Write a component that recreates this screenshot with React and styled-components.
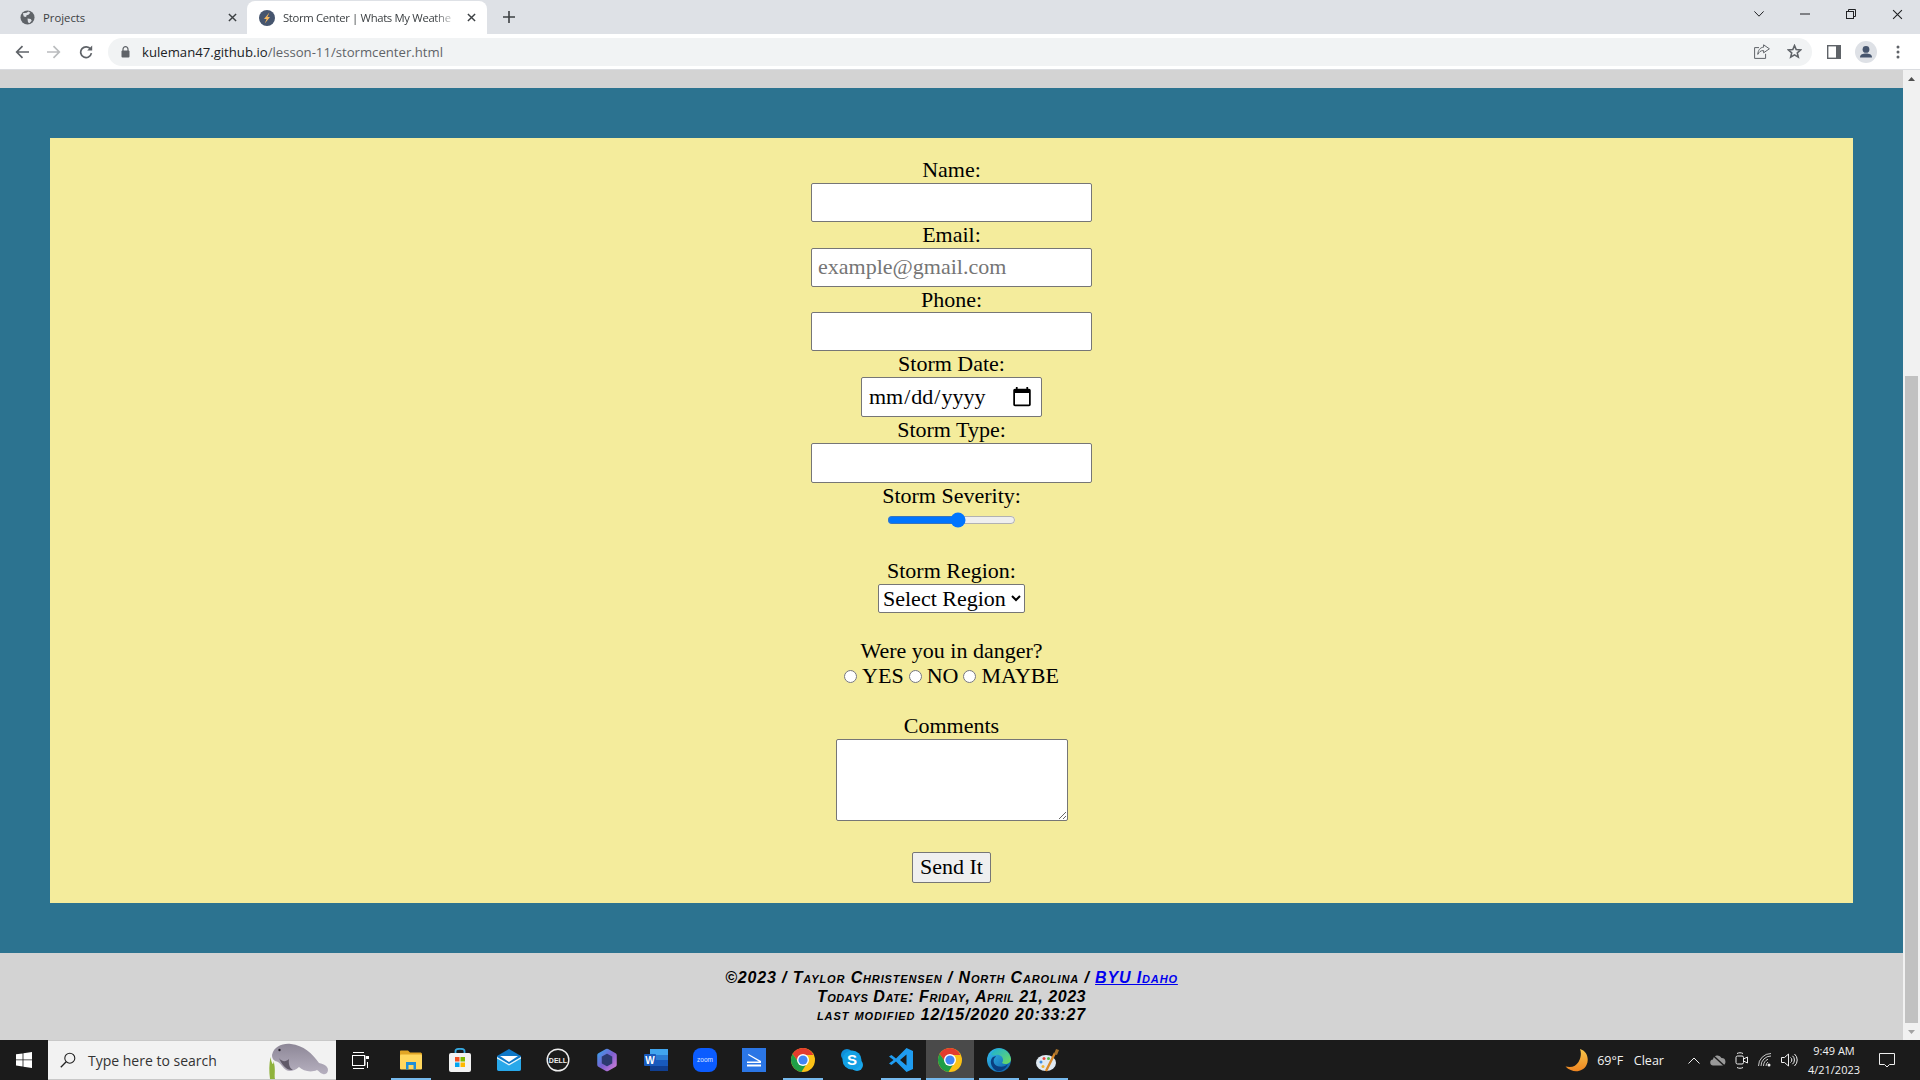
import React from "react";
import styled, { createGlobalStyle } from "styled-components";

const Global = createGlobalStyle`
  html, body { margin: 0; padding: 0; height: 100%; overflow: hidden; }
  #root { height: 100%; }
  * { box-sizing: border-box; }
`;

const Shell = styled.div`
  width: 1920px; height: 1080px; display: flex; flex-direction: column;
  font-family: "Open Sans", "Noto Sans", sans-serif; background: #d3d3d3;
`;

/* ---------- browser chrome ---------- */
const TabStrip = styled.div`
  height: 34px; background: #dee1e6; display: flex; align-items: stretch; flex: none;
`;
const Tab = styled.div`
  width: ${p => p.$w}px; padding-left: ${p => p.$pl}px; padding-right: ${p => p.$pr}px;
  display: flex; align-items: center; gap: 8px; font-size: 11.3px; color: #3c4043;
  margin-top: 1px;
  background: ${p => (p.$active ? "#fff" : "transparent")};
  border-radius: ${p => (p.$active ? "8px 8px 0 0" : "0")};
`;
const TabTitle = styled.span`
  flex: 1; white-space: nowrap; min-width: 0;
  ${p => p.$fade && "letter-spacing: -.33px; -webkit-mask-image: linear-gradient(90deg, #000 86%, transparent 99%);"}
`;
const NewTab = styled.div`
  width: 44px; display: flex; align-items: center; justify-content: center;
`;
const WindowControls = styled.div`
  margin-left: auto; display: flex; align-items: center; height: 28px;
`;
const WinBtn = styled.div`
  width: 46px; height: 28px; display: flex; align-items: center; justify-content: center;
`;

const Toolbar = styled.div`
  height: 36px; background: #fff; display: flex; align-items: center; flex: none;
  border-bottom: 1px solid #dadce0; padding-left: 6px;
`;
const NavBtn = styled.div`
  width: 32px; height: 28px; display: flex; align-items: center; justify-content: center;
`;
const Omnibox = styled.div`
  width: 1704px; height: 28px; margin-left: 6px; border-radius: 14px; background: #f1f3f4;
  display: flex; align-items: center; padding-left: 13px; gap: 12px; font-size: 13.15px;
`;
const UrlHost = styled.span`color: #202124;`;
const UrlPath = styled.span`color: #5f6368;`;
const OmniEnd = styled.div`
  margin-left: auto; display: flex; align-items: center; gap: 16.5px; padding-right: 10.5px;
`;
const ToolEnd = styled.div`
  display: flex; align-items: center; margin-left: 15px; gap: 14px;
`;
const DotsSlot = styled.div`display: flex; margin-left: 5px;`;

/* ---------- page ---------- */
const Middle = styled.div`flex: 1; display: flex; min-height: 0;`;
const Viewport = styled.div`flex: 1; display: flex; flex-direction: column; min-width: 0;`;
const HeaderSliver = styled.div`height: 18px; background: #d3d3d3; flex: none;`;
const Main = styled.main`flex: 1; background: #2c7390; padding: 50px; display: flex;`;
const Panel = styled.div`
  flex: 1; background: #f4ec9c; padding-top: 19.4px; display: flex; flex-direction: column; align-items: center;
  font-family: "Liberation Serif", "Times New Roman", serif; font-size: 22px; color: #000;
`;
const Label = styled.label`
  display: block; line-height: 25.6px; height: 25.6px; text-align: center; margin-top: ${p => p.$mt || 0}px;
`;
const TextInput = styled.input`
  width: 281px; height: ${p => p.$h || 39}px; font: inherit; padding: 1px 6px; border: 1px solid #767676; border-radius: 2px;
  background: #fff; display: block;
  &::placeholder { color: #757575; }
`;
const DateInput = styled.input`
  width: 181px; height: 40.4px; font: inherit; padding: 1px 6px; border: 1px solid #767676; border-radius: 2px;
  background: #fff; display: block;
`;
const Range = styled.input`
  width: 129px; height: 16px; margin: 3.6px 0 0; display: block; accent-color: #0075ff;
`;
const Select = styled.select`
  width: 147px; height: 29px; font: inherit; border: 1px solid #767676; border-radius: 2px; background: #fff;
  display: block; padding: 0;
`;
const RadioRow = styled.div`
  display: flex; align-items: center; height: 25.6px; justify-content: center;
`;
const Radio = styled.input`
  width: 13px; height: 13px; margin: 2px 5px 0 ${p => p.$ml}px; flex: none;
`;
const Comments = styled.textarea`
  width: 232px; height: 82px; font: inherit; border: 1px solid #767676; border-radius: 2px; background: #fff;
  display: block; padding: 2px;
`;
const Send = styled.button`
  width: 79px; height: 31px; margin-top: 31px; font: inherit; padding: 0; border: 1px solid #767676;
  border-radius: 2px; background: #efefef; color: #000;
`;
const Footer = styled.footer`
  height: 87px; background: #d3d3d3; flex: none; padding-top: 16px; text-align: center; color: #000;
  font-family: "Liberation Sans", Arial, sans-serif; font-style: italic; font-weight: 700; font-variant: small-caps;
  font-size: 16px; line-height: 18.7px;
`;
const FooterLine = styled.div`letter-spacing: ${p => p.$ls}px;`;
const FooterLink = styled.a`color: #0000ee; text-decoration: underline;`;

const Scrollbar = styled.div`
  width: 17px; flex: none; background: #f1f1f1; display: flex; flex-direction: column; align-items: center;
`;
const ScrollArrow = styled.div`
  height: 17px; flex: none; display: flex; align-items: center; justify-content: center; width: 100%;
`;
const ScrollTrack = styled.div`
  flex: 1; width: 100%; display: flex; flex-direction: column; justify-content: flex-end; align-items: center;
`;
const ScrollThumb = styled.div`width: 13px; height: 647px; background: #c1c1c1;`;

/* ---------- taskbar ---------- */
const Taskbar = styled.div`
  height: 40px; flex: none; background: #1b1b1b; display: flex; align-items: stretch; color: #fff;
`;
const Start = styled.div`width: 48px; display: flex; align-items: center; justify-content: center;`;
const Search = styled.div`
  width: 288px; background: #f2f2f2; border-top: 1px solid #c8c8c8; border-bottom: 1px solid #c8c8c8;
  display: flex; align-items: center; color: #333; font-size: 14px; padding-left: 12px; gap: 12px;
`;
const SearchArt = styled.div`margin-left: auto; height: 38px; display: flex; align-items: flex-end; margin-right: 5px;`;
const TaskList = styled.div`display: flex; gap: 1px; margin-left: 2px;`;
const TaskBtn = styled.div`
  width: 48px; display: flex; align-items: center; justify-content: center; position: relative;
  padding-right: ${p => p.$pr || 0}px;
  background: ${p => (p.$active ? "#4a4a4a" : "transparent")};
  &::after {
    content: ""; display: ${p => (p.$open ? "block" : "none")}; position: absolute; bottom: 0; height: 2px;
    left: ${p => (p.$active ? 0 : 4)}px; right: ${p => (p.$active ? 0 : 4)}px; background: #76b9ed;
  }
`;
const Tray = styled.div`
  margin-left: auto; display: flex; align-items: center; font-size: 12.5px; color: #f2f2f2; padding-right: 15px;
`;
const Weather = styled.div`display: flex; align-items: center; gap: 9px; margin-right: 24.5px;`;
const Temp = styled.span`margin-right: 1.5px;`;
const TrayIcons = styled.div`display: flex; align-items: center; gap: 9.4px;`;
const Clock = styled.div`
  width: 70px; margin-left: 1px; text-align: center; font-size: 11px; line-height: 19px;
`;
const Notify = styled.div`width: 36px; display: flex; justify-content: center;`;
const LogoText = styled.text`
  font-family: "Liberation Sans", Arial, sans-serif; font-weight: ${p => p.$w || 400};
`;

/* ---------- icons ---------- */
const Globe = () => (
  <svg width="15" height="15" viewBox="0 0 16 16">
    <circle cx="8" cy="8" r="7.5" fill="#5f6368" />
    <path d="M3 3.5 L7 3 L9 1.5 L11 3 L9 5 L7 5.5 L6.5 7.5 L4 7 Z M8 9 L11.5 9.5 L12.5 11.5 L10 14 L8.5 13 Z" fill="#dee1e6" />
  </svg>
);
const Bolt = () => (
  <svg width="16" height="16" viewBox="0 0 16 16">
    <circle cx="8" cy="8" r="8" fill="#46556e" />
    <path d="M10.4 2.6 L5 9 L7.6 9 L5.8 13.4 L11 7 L8.4 7 Z" fill="#f6b75c" />
  </svg>
);
const X = ({ c = "#3c4043", s = 9, w = 1.6 }) => (
  <svg width={s} height={s} viewBox="0 0 10 10"><path d="M1 1 L9 9 M9 1 L1 9" stroke={c} strokeWidth={w} fill="none" /></svg>
);
const Plus = () => (
  <svg width="12" height="12" viewBox="0 0 12 12"><path d="M6 0 V12 M0 6 H12" stroke="#3c4043" strokeWidth="1.6" /></svg>
);
const Arrow = ({ c, flip }) => (
  <svg width="14" height="14" viewBox="0 0 14 14" style={flip ? { transform: "scaleX(-1)" } : undefined}>
    <path d="M14 7 H2 M7.5 1.2 L1.7 7 L7.5 12.8" stroke={c} strokeWidth="1.7" fill="none" />
  </svg>
);
const Reload = () => (
  <svg width="14" height="14" viewBox="0 0 14 14">
    <path d="M11.6 4.2 A5.4 5.4 0 1 0 12.4 8.2" stroke="#5f6368" strokeWidth="1.7" fill="none" />
    <path d="M13.2 0.6 V5.6 H8.2 Z" fill="#5f6368" />
  </svg>
);
const Lock = () => (
  <svg width="9" height="12" viewBox="0 0 9 12">
    <path d="M2 5 V3.2 A2.5 2.5 0 0 1 7 3.2 V5" stroke="#5f6368" strokeWidth="1.2" fill="none" />
    <rect x="0.5" y="4.6" width="8" height="7" rx="1" fill="#5f6368" />
  </svg>
);
const Share = () => (
  <svg width="16" height="15" viewBox="0 0 16 15">
    <path d="M5 3.6 H0.6 V14.4 H11.6 V9.8" stroke="#5f6368" strokeWidth="1" fill="none" />
    <path d="M9.6 0.8 L15.4 4.8 L9.6 8.8 V6.6 C6.6 6.4 5 8 3.8 10.4 C4 6.4 6 3.4 9.6 3.2 Z" stroke="#5f6368" strokeWidth="1" fill="#f1f3f4" />
  </svg>
);
const Star = () => (
  <svg width="15" height="15" viewBox="0 0 15 15">
    <path d="M7.5 1.6 L9.2 5.6 L13.6 6 L10.3 8.9 L11.3 13.2 L7.5 10.9 L3.7 13.2 L4.7 8.9 L1.4 6 L5.8 5.6 Z" fill="none" stroke="#5f6368" strokeWidth="1.6" />
  </svg>
);
const SidePanel = () => (
  <svg width="14" height="14" viewBox="0 0 14 14">
    <rect width="14" height="14" fill="#5f6368" /><rect x="1.4" y="1.4" width="7.6" height="11.2" fill="#fff" />
  </svg>
);
const Profile = () => (
  <svg width="22" height="22" viewBox="0 0 22 22">
    <circle cx="11" cy="11" r="11" fill="#dee1e6" />
    <circle cx="11" cy="8.4" r="3.4" fill="#46556e" />
    <path d="M5 16.4 C5 13.4 8 12.6 11 12.6 C14 12.6 17 13.4 17 16.4 Z" fill="#46556e" />
  </svg>
);
const Dots = () => (
  <svg width="4" height="14" viewBox="0 0 4 14">
    <circle cx="2" cy="2" r="1.5" fill="#5f6368" /><circle cx="2" cy="7" r="1.5" fill="#5f6368" /><circle cx="2" cy="12" r="1.5" fill="#5f6368" />
  </svg>
);
const Chevron = () => (
  <svg width="10" height="6" viewBox="0 0 10 6"><path d="M0.4 0.4 L5 5.2 L9.6 0.4" stroke="#202124" strokeWidth="1" fill="none" /></svg>
);
const Minimize = () => <svg width="10" height="2" viewBox="0 0 10 2"><path d="M0 1 H10" stroke="#202124" strokeWidth="1" /></svg>;
const Restore = () => (
  <svg width="10" height="10" viewBox="0 0 10 10">
    <rect x="0.5" y="2.5" width="7" height="7" fill="none" stroke="#202124" /><path d="M2.5 2.5 V0.5 H9.5 V7.5 H7.5" fill="none" stroke="#202124" />
  </svg>
);
const TriUp = () => <svg width="7" height="4" viewBox="0 0 7 4"><path d="M3.5 0 L7 4 H0 Z" fill="#505050" /></svg>;
const TriDown = () => <svg width="7" height="4" viewBox="0 0 7 4"><path d="M0 0 H7 L3.5 4 Z" fill="#a3a3a3" /></svg>;

const WinLogo = () => (
  <svg width="16" height="16" viewBox="0 0 16 16">
    <path d="M0 2.3 L6.6 1.4 V7.5 H0 Z M7.4 1.3 L16 0 V7.5 H7.4 Z M0 8.3 H6.6 V14.5 L0 13.6 Z M7.4 8.3 H16 V16 L7.4 14.7 Z" fill="#fff" />
  </svg>
);
const SearchIcon = () => (
  <svg width="16" height="16" viewBox="0 0 16 16">
    <circle cx="9.8" cy="6.2" r="5" fill="none" stroke="#222" strokeWidth="1.1" /><path d="M6.2 9.8 L0.8 15.2" stroke="#222" strokeWidth="1.3" />
  </svg>
);
const Manatee = () => (
  <svg width="62" height="38" viewBox="0 0 62 38">
    <defs>
      <linearGradient id="man" x1="0" y1="0" x2="0" y2="1">
        <stop offset="0" stopColor="#8d8797" /><stop offset="1" stopColor="#b6b0bf" />
      </linearGradient>
    </defs>
    <path d="M1 38 C0 30 0 24 1.500 16 C2.500 22 4.500 26 4.500 20 C7 28 5 34 6 38 Z" fill="#8fb23c" />
    <path d="M3 14 C5 5 14 2 22 3 C34 4 44 13 50 22 C54 23 57 24 58.600 27 C60 31 57 34 54 33 C50 31.500 50 30 48 29 C42 32 34 30 30 26 C26 30 20 31 17 29 C14 27 12 23 9 21 C6 20 3 19 3 14 Z" fill="url(#man)" />
    <path d="M10 17 C13 21 17 21 20 18 C19 25 22 28 24 29 C18 30 13 24 10 17 Z" fill="#605a68" />
    <circle cx="10.500" cy="9" r="1.200" fill="#2a2530" />
  </svg>
);
const TaskView = () => (
  <svg width="17" height="17" viewBox="0 0 17 17">
    <path d="M1 0.5 H12 M1 16.500 H12 M0 3.500 H13 V13.500 H0 M0.500 3.500 V13.500 M12.500 3.500 V13.500" stroke="#fff" strokeWidth="1" fill="none" />
    <rect x="14" y="4" width="3" height="3" fill="#fff" /><path d="M15.500 10 V16" stroke="#fff" />
  </svg>
);
const Explorer = () => (
  <svg width="22" height="20" viewBox="0 0 22 20">
    <path d="M0 1.500 C0 .800 .500 .500 1 .500 H8 L10 2.500 H20 C21 2.500 22 3 22 4 V6 H0 Z" fill="#e0a526" />
    <rect x="0" y="4.500" width="22" height="15" rx="1" fill="#ffd75e" />
    <path d="M6 19.500 V12 H16 V19.500 H13.500 V15 H8.500 V19.500 Z" fill="#1e8fd8" />
  </svg>
);
const Store = () => (
  <svg width="22" height="24" viewBox="0 0 22 24">
    <path d="M6.500 7 V3 C6.500 1.500 8 .8 11 .8 C14 .8 15.500 1.500 15.500 3 V7" fill="none" stroke="#36a9e0" strokeWidth="1.800" />
    <rect x="0" y="5" width="22" height="19" rx="2" fill="#f2f2f2" />
    <rect x="6" y="9" width="4.500" height="4.500" fill="#f25022" /><rect x="11.500" y="9" width="4.500" height="4.500" fill="#7fba00" />
    <rect x="6" y="14.500" width="4.500" height="4.500" fill="#00a4ef" /><rect x="11.500" y="14.500" width="4.500" height="4.500" fill="#ffb900" />
  </svg>
);
const Mail = () => (
  <svg width="24" height="22" viewBox="0 0 24 22">
    <path d="M0 7 L12 0 L24 7 V20 C24 21 23 22 22 22 H2 C1 22 0 21 0 20 Z" fill="#0f78c8" />
    <path d="M0 8 L12 15 L24 8 V20 C24 21 23 22 22 22 H2 C1 22 0 21 0 20 Z" fill="#28a8ea" />
    <path d="M3 7 H21 L12 13 Z" fill="#fff" /><path d="M0 8 L12 15 L24 8 V9.500 L12 16.500 L0 9.500 Z" fill="#e6f4fb" />
  </svg>
);
const Dell = () => (
  <svg width="24" height="24" viewBox="0 0 24 24">
    <circle cx="12" cy="12" r="10.800" fill="none" stroke="#eee" strokeWidth="1.400" />
    <LogoText x="12" y="14.500" textAnchor="middle" fontSize="7" fill="#eee" $w={700}>DELL</LogoText>
  </svg>
);
const Copilot = () => (
  <svg width="20" height="24" viewBox="0 0 20 24">
    <defs>
      <linearGradient id="cop" x1="0" y1="0" x2="1" y2="1">
        <stop offset="0" stopColor="#3f9ae8" /><stop offset=".5" stopColor="#7d5fd0" /><stop offset="1" stopColor="#c77ad6" />
      </linearGradient>
    </defs>
    <path d="M10 3 L17.500 7.300 V16.700 L10 21 L2.500 16.700 V7.300 Z" fill="#2c3a70" stroke="url(#cop)" strokeWidth="4.500" strokeLinejoin="round" />
  </svg>
);
const Word = () => (
  <svg width="24" height="24" viewBox="0 0 24 24">
    <rect x="6" y="1" width="18" height="22" rx="1" fill="#2b7cd3" /><rect x="6" y="1" width="18" height="6" fill="#41a5ee" />
    <rect x="6" y="12" width="18" height="6" fill="#185abd" /><rect x="6" y="18" width="18" height="5" fill="#103f91" />
    <rect x="0" y="6" width="12" height="12" rx="1" fill="#185abd" />
    <LogoText x="6" y="15.500" textAnchor="middle" fontSize="10" fill="#fff" $w={700}>W</LogoText>
  </svg>
);
const Zoom = () => (
  <svg width="24" height="24" viewBox="0 0 24 24">
    <rect width="24" height="24" rx="8" fill="#0b5cff" />
    <LogoText x="12" y="14" textAnchor="middle" fontSize="6.500" fill="#dbe6ff">zoom</LogoText>
  </svg>
);
const Scan = () => (
  <svg width="24" height="24" viewBox="0 0 24 24">
    <rect width="24" height="24" fill="#2b76e5" />
    <path d="M6 7 L17 13.500 H5 V15 H19 V13 L6.500 6 Z" fill="#fff" /><rect x="5" y="16.500" width="14" height="2" fill="#fff" />
  </svg>
);
const Chrome = () => (
  <svg width="24" height="24" viewBox="0 0 24 24">
    <circle cx="12" cy="12" r="12" fill="#fbc116" />
    <path d="M12 0 A12 12 0 0 0 1.600 6 L7.800 14.500 L12 7 H22.400 A12 12 0 0 0 12 0 Z" fill="#e33b2e" />
    <path d="M1.600 6 A12 12 0 0 0 10.400 23.900 L15.500 16 L7.800 14.500 Z" fill="#1f9e47" />
    <circle cx="12" cy="12" r="6" fill="#fff" /><circle cx="12" cy="12" r="4.600" fill="#4285f4" />
  </svg>
);
const Skype = () => (
  <svg width="22" height="22" viewBox="0 0 22 22">
    <circle cx="6" cy="6" r="6" fill="#0f8fd8" /><circle cx="16" cy="16" r="6" fill="#1aa7ec" /><circle cx="11" cy="11" r="9.500" fill="#12a0e4" />
    <LogoText x="11" y="16" textAnchor="middle" fontSize="15" fill="#fff" $w={700}>S</LogoText>
  </svg>
);
const VSCode = () => (
  <svg width="24" height="24" viewBox="0 0 24 24">
    <path d="M17.500 0 L24 3 V21 L17.500 24 L7 13.500 L2.500 17 L0 15.500 L4.500 12 L0 8.500 L2.500 7 L7 10.500 Z M17.500 6.500 L11 12 L17.500 17.500 Z" fill="#1f9cf0" />
  </svg>
);
const Edge = () => (
  <svg width="24" height="24" viewBox="0 0 24 24">
    <defs>
      <linearGradient id="edg" x1="0" y1="0" x2="1" y2="1">
        <stop offset="0" stopColor="#35c1f1" /><stop offset="1" stopColor="#0c59a4" />
      </linearGradient>
      <linearGradient id="edg2" x1="0" y1="0" x2="1" y2="1">
        <stop offset="0" stopColor="#1bb0d8" /><stop offset="1" stopColor="#6fdc5b" />
      </linearGradient>
    </defs>
    <circle cx="12" cy="12" r="12" fill="url(#edg)" />
    <path d="M4 6 C8 -2 22 -1 24 11 C24 16 18 17 15 15 C18 11 14 6 9 7 C7 7.500 5 8 4 6 Z" fill="url(#edg2)" />
    <path d="M9 8.500 C5 11 6 18 12 18.500 C16 19 19 18 21 16 C19 21 14 24 10 23 C5 21 2 14 5 10 C6 9 8 8 9 8.500 Z" fill="#0a3f80" />
  </svg>
);
const Paint = () => (
  <svg width="25" height="25" viewBox="0 0 25 25">
    <ellipse cx="10" cy="15" rx="10" ry="8" fill="#dfe9f2" />
    <circle cx="5" cy="14" r="1.500" fill="#3e8fe0" /><circle cx="8" cy="10.500" r="1.500" fill="#e8483d" />
    <circle cx="12.500" cy="10.500" r="1.500" fill="#57b947" /><circle cx="7" cy="18.500" r="1.500" fill="#f2b632" />
    <path d="M10 23 L19 5" stroke="#d8892a" strokeWidth="2.400" /><path d="M18 6 L20 1 L23 2 L21 7 Z" fill="#a8722b" />
  </svg>
);
const Moon = () => (
  <svg width="23" height="23" viewBox="0 0 23 23">
    <defs>
      <linearGradient id="mn" x1="0" y1="0" x2="0" y2="1">
        <stop offset="0" stopColor="#f8c64a" /><stop offset="1" stopColor="#ee8420" />
      </linearGradient>
    </defs>
    <path d="M15 0 C22 2 24.500 10 21.500 16 C18 23 8 25 0.500 17.500 C7 19 11 17 13.500 13 C16 9 16.500 4 15 0 Z" fill="url(#mn)" />
  </svg>
);
const Caret = () => <svg width="12" height="7" viewBox="0 0 12 7"><path d="M.5 6.500 L6 1 L11.500 6.500" stroke="#eee" strokeWidth="1" fill="none" /></svg>;
const Cloud = () => (
  <svg width="16" height="12" viewBox="0 0 16 12">
    <path d="M3.500 11.500 A3 3 0 0 1 3 5.500 A4.500 4.500 0 0 1 11.500 4 A3.800 3.800 0 0 1 12.500 11.500 Z" fill="#999" /><path d="M2 0.500 L14 11.500" stroke="#1b1b1b" strokeWidth="1.400" />
  </svg>
);
const Meet = () => (
  <svg width="13" height="17" viewBox="0 0 13 17">
    <rect x="1" y="4" width="7.500" height="8" rx="1.500" fill="none" stroke="#eee" /><path d="M8.500 7 L12.500 5 V11 L8.500 9" fill="none" stroke="#eee" />
    <path d="M2 1.500 C4 .500 6 .500 8 1.500 M2 15.500 C4 16.500 6 16.500 8 15.500" fill="none" stroke="#eee" />
  </svg>
);
const Wifi = () => (
  <svg width="14" height="14" viewBox="0 0 14 14">
    <path d="M.5 13 A12.500 12.500 0 0 1 13 .5 M3 13 A10 10 0 0 1 13 3 M5.500 13 A7.500 7.500 0 0 1 10 6.200 M8 13 A5 5 0 0 1 10 9" fill="none" stroke="#ddd" strokeWidth=".9" />
    <circle cx="11" cy="12" r="1.500" fill="#eee" />
  </svg>
);
const Volume = () => (
  <svg width="17" height="14" viewBox="0 0 17 14">
    <path d="M.5 4.500 H3.500 L7.500 1 V13 L3.500 9.500 H.5 Z" fill="none" stroke="#eee" />
    <path d="M9.500 4.500 A3 3 0 0 1 9.500 9.500 M11.500 2.800 A5.500 5.500 0 0 1 11.500 11.200 M13.500 1 A8 8 0 0 1 13.500 13" fill="none" stroke="#eee" />
  </svg>
);
const Bubble = () => (
  <svg width="16" height="15" viewBox="0 0 16 15">
    <path d="M.5 .5 H15.500 V11.500 H10.500 L8 14 L5.500 11.500 H.5 Z" fill="none" stroke="#eee" />
  </svg>
);

const tasks = [
  [Explorer, true], [Store], [Mail], [Dell], [Copilot], [Word], [Zoom], [Scan],
  [Chrome, true], [Skype], [VSCode, true], [Chrome, true, true], [Edge, true], [Paint, true],
];

export default function App() {
  return (
    <Shell>
      <Global />
      <TabStrip>
        <Tab $w={247} $pl={20} $pr={10.5}>
          <Globe /><TabTitle>Projects</TabTitle><X />
        </Tab>
        <Tab $active $w={240} $pl={12} $pr={11.5}>
          <Bolt /><TabTitle $fade>Storm Center | Whats My Weathe</TabTitle><X />
        </Tab>
        <NewTab><Plus /></NewTab>
        <WindowControls>
          <WinBtn><Chevron /></WinBtn>
          <WinBtn><Minimize /></WinBtn>
          <WinBtn><Restore /></WinBtn>
          <WinBtn><X c="#202124" s={11} w={1} /></WinBtn>
        </WindowControls>
      </TabStrip>
      <Toolbar>
        <NavBtn><Arrow c="#5f6368" /></NavBtn>
        <NavBtn><Arrow c="#babcbe" flip /></NavBtn>
        <NavBtn><Reload /></NavBtn>
        <Omnibox>
          <Lock />
          <span><UrlHost>kuleman47.github.io</UrlHost><UrlPath>/lesson-11/stormcenter.html</UrlPath></span>
          <OmniEnd><Share /><Star /></OmniEnd>
        </Omnibox>
        <ToolEnd><SidePanel /><Profile /><DotsSlot><Dots /></DotsSlot></ToolEnd>
      </Toolbar>

      <Middle>
        <Viewport>
          <HeaderSliver />
          <Main>
            <Panel as="form">
              <Label>Name:</Label>
              <TextInput type="text" />
              <Label>Email:</Label>
              <TextInput type="email" placeholder="example@gmail.com" />
              <Label>Phone:</Label>
              <TextInput type="tel" />
              <Label>Storm Date:</Label>
              <DateInput type="date" />
              <Label>Storm Type:</Label>
              <TextInput type="text" $h={40} />
              <Label>Storm Severity:</Label>
              <Range type="range" min="0" max="100" defaultValue="56" />
              <Label $mt={30}>Storm Region:</Label>
              <Select defaultValue="x"><option value="x">Select Region</option></Select>
              <Label $mt={25}>Were you in danger?</Label>
              <RadioRow>
                <Radio type="radio" name="d" $ml={0} />YES
                <Radio type="radio" name="d" $ml={5} />NO
                <Radio type="radio" name="d" $ml={5} />MAYBE
              </RadioRow>
              <Label $mt={24.5}>Comments</Label>
              <Comments />
              <Send type="button">Send It</Send>
            </Panel>
          </Main>
          <Footer>
            <FooterLine $ls={0.86}>©2023 / Taylor Christensen / North Carolina / <FooterLink href="#">BYU Idaho</FooterLink></FooterLine>
            <FooterLine $ls={0.55}>Todays Date: Friday, April 21, 2023</FooterLine>
            <FooterLine $ls={0.88}>last modified 12/15/2020 20:33:27</FooterLine>
          </Footer>
        </Viewport>
        <Scrollbar>
          <ScrollArrow><TriUp /></ScrollArrow>
          <ScrollTrack><ScrollThumb /></ScrollTrack>
          <ScrollArrow><TriDown /></ScrollArrow>
        </Scrollbar>
      </Middle>

      <Taskbar>
        <Start><WinLogo /></Start>
        <Search><SearchIcon />Type here to search<SearchArt><Manatee /></SearchArt></Search>
        <TaskList>
          <TaskBtn $pr={4}><TaskView /></TaskBtn>
          {tasks.map(([Icon, open, active], i) => (
            <TaskBtn key={i} $open={open} $active={active}><Icon /></TaskBtn>
          ))}
        </TaskList>
        <Tray>
          <Weather><Moon /><Temp>69°F</Temp><span>Clear</span></Weather>
          <TrayIcons><Caret /><Cloud /><Meet /><Wifi /><Volume /></TrayIcons>
          <Clock>9:49 AM<br />4/21/2023</Clock>
          <Notify><Bubble /></Notify>
        </Tray>
      </Taskbar>
    </Shell>
  );
}
